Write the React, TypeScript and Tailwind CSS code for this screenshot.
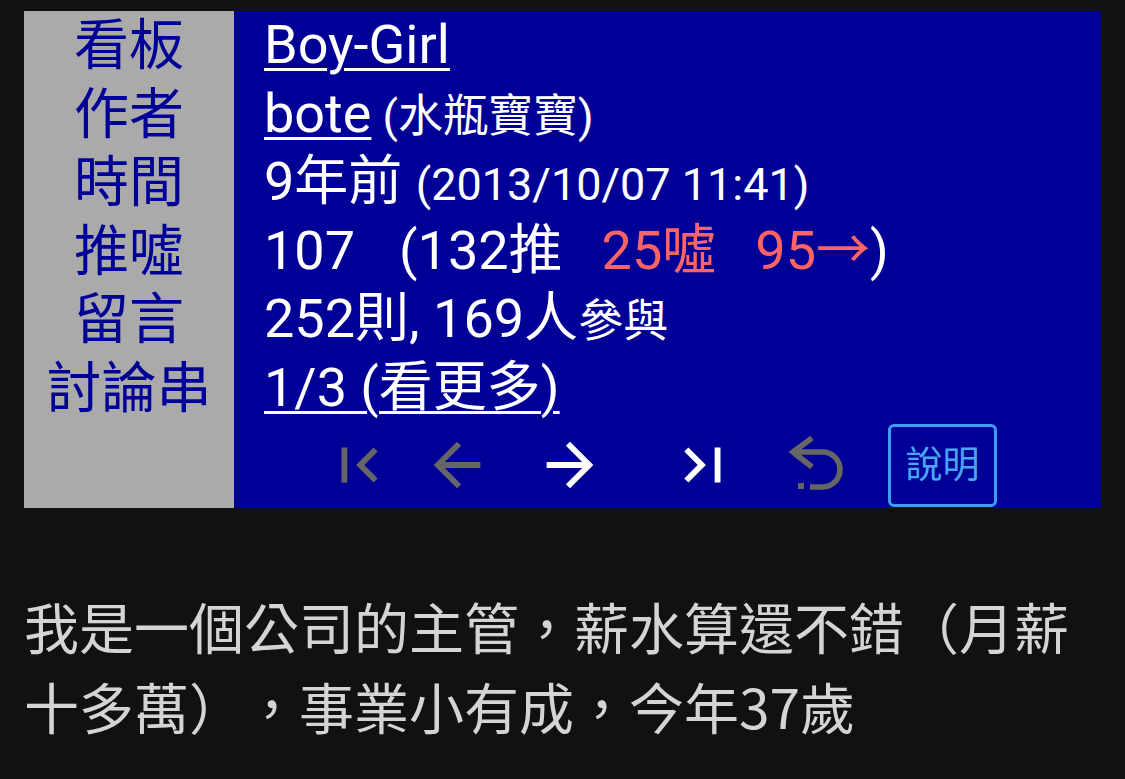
import React from 'react'

const LABELS = ['看板', '作者', '時間', '推噓', '留言', '討論串']

const FONT = 'font-[Roboto,"Noto_Sans_CJK_TC",sans-serif]'

function NavIcon({ d, color }: { d: string; color: string }) {
  return (
    <svg width="70" height="70" viewBox="0 0 24 24" fill={color} className="shrink-0">
      <path d={d} />
    </svg>
  )
}

function UndoIcon() {
  return (
    <svg width="70" height="70" viewBox="0 0 70 70" fill="none" className="shrink-0">
      <path
        d="M32 8 L13 22 L32 37 M13 22 H42.5 A17.5 17.5 0 0 1 42.5 57 H30"
        stroke="#666666"
        strokeWidth="5.6"
        strokeLinejoin="miter"
      />
      <rect x="18" y="53" width="6" height="6" fill="#666666" />
    </svg>
  )
}

export default function App() {
  return (
    <div lang="zh-TW" className={`min-h-screen bg-[#111111] pt-[11px] ${FONT}`}>
      {/* Info table */}
      <div className="mx-6 flex">
        <div className="w-[210px] shrink-0 bg-[#aaaaaa] flex flex-col">
          {LABELS.map((l) => (
            <div
              key={l}
              className="h-[68.6px] flex items-center justify-center text-[55px] leading-[68.6px] text-[#000096]"
            >
              {l}
            </div>
          ))}
        </div>

        <div className="flex-1 bg-[#000096] pl-[30px] text-white text-[54px] leading-[68.6px]">
          <div className="h-[68.6px] whitespace-nowrap">
            <span className="underline decoration-[3px] underline-offset-[5px]">Boy-Girl</span>
          </div>
          <div className="h-[68.6px] whitespace-nowrap">
            <span className="underline decoration-[3px] underline-offset-[5px]">bote</span>
            <span className="text-[45px]"> (水瓶寶寶)</span>
          </div>
          <div className="h-[68.6px] whitespace-nowrap">
            9年前 <span className="text-[45px]">(2013/10/07 11:41)</span>
          </div>
          <div className="h-[68.6px] whitespace-nowrap">
            <span>107</span>
            <span className="ml-[44px]">(132推</span>
            <span className="ml-[39px] text-[#ff6464]">25噓</span>
            <span className="ml-[39px] text-[#ff6464]">95→</span>
            <span>)</span>
          </div>
          <div className="h-[68.6px] whitespace-nowrap">
            252則, 169人<span className="text-[45px]">參與</span>
          </div>
          <div className="h-[68.6px] whitespace-nowrap">
            <span className="underline decoration-[3px] underline-offset-[5px]">1/3 (看更多)</span>
          </div>

          {/* Navigation */}
          <div className="h-[85.4px] flex items-center -ml-[3px]">
            <div className="ml-[63px]">
              <NavIcon color="#666666" d="M18.41 16.59L13.82 12l4.59-4.59L17 6l-6 6 6 6zM6 6h2v12H6z" />
            </div>
            <div className="ml-[28px]">
              <NavIcon color="#666666" d="M20 11H7.83l5.59-5.59L12 4l-8 8 8 8 1.41-1.41L7.83 13H20v-2z" />
            </div>
            <div className="ml-[43px]">
              <NavIcon color="#ffffff" d="M12 4l-1.41 1.41L16.17 11H4v2h12.17l-5.58 5.59L12 20l8-8z" />
            </div>
            <div className="ml-[63px]">
              <NavIcon color="#ffffff" d="M5.59 7.41L10.18 12l-4.59 4.59L7 18l6-6-6-6zM16 6h2v12h-2z" />
            </div>
            <div className="ml-[42px]">
              <UndoIcon />
            </div>
            <button className="ml-[38px] w-[109px] h-[83px] rounded-[6px] border-[3px] border-[#3d9df2] text-[#4aa6f5] text-[37px] leading-none flex items-center justify-center">
              說明
            </button>
          </div>
        </div>
      </div>

      {/* Body */}
      <p className={`mt-[77px] px-6 text-[55px] leading-[80px] text-[#d4d4d4] [text-spacing-trim:space-all] font-["Noto_Sans_CJK_TC",sans-serif]`}>
        我是一個公司的主管，薪水算還不錯（月薪十多萬），事業小有成，今年37歲
      </p>
    </div>
  )
}
